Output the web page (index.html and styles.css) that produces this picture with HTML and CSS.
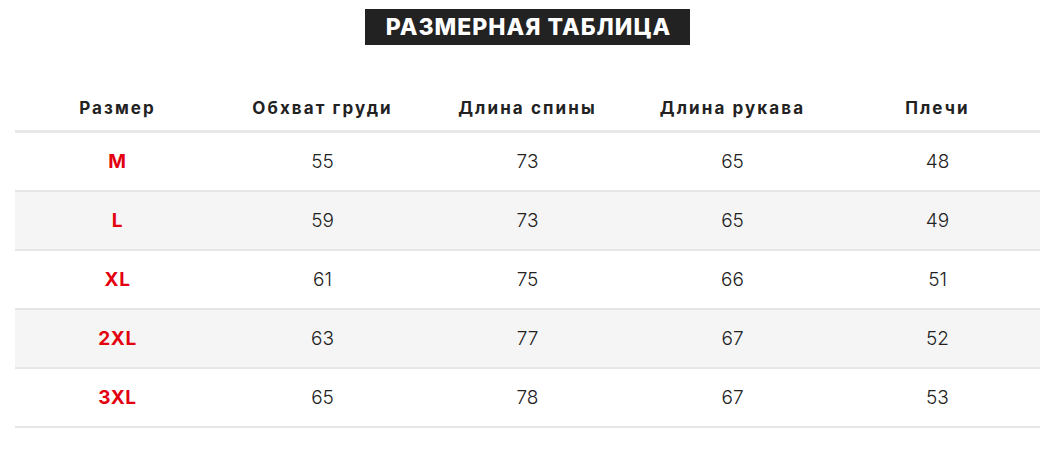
FILE: index.html
```html
<!DOCTYPE html>
<html lang="ru">
<head>
<meta charset="utf-8">
<title>Размерная таблица</title>
<link rel="stylesheet" href="styles.css">
</head>
<body>
<div class="page">
  <div class="title-wrap"><h1 class="title">РАЗМЕРНАЯ ТАБЛИЦА</h1></div>
  <table class="sizes">
    <thead>
      <tr><th>Размер</th><th>Обхват груди</th><th>Длина спины</th><th>Длина рукава</th><th>Плечи</th></tr>
    </thead>
    <tbody>
      <tr><td class="sz">M</td><td>55</td><td>73</td><td>65</td><td>48</td></tr>
      <tr class="alt"><td class="sz">L</td><td>59</td><td>73</td><td>65</td><td>49</td></tr>
      <tr><td class="sz">XL</td><td>61</td><td>75</td><td>66</td><td>51</td></tr>
      <tr class="alt"><td class="sz">2XL</td><td>63</td><td>77</td><td>67</td><td>52</td></tr>
      <tr><td class="sz">3XL</td><td>65</td><td>78</td><td>67</td><td>53</td></tr>
    </tbody>
  </table>
</div>
</body>
</html>
```

FILE: styles.css
```css
html, body {
  margin: 0;
  padding: 0;
  background: #ffffff;
}
body {
  font-family: "Inter", "Open Sans", "Liberation Sans", sans-serif;
  color: #222222;
}
.page {
  padding: 9px 13px 0 15px;
}
.title-wrap {
  display: flex;
  justify-content: center;
}
.title {
  margin: 0;
  background: #222222;
  color: #ffffff;
  font-size: 23px;
  font-weight: 800;
  letter-spacing: 1px;
  height: 36px;
  line-height: 37px;
  padding: 0 19px 0 21px;
}
.sizes {
  width: 100%;
  margin-top: 33px;
  border-collapse: collapse;
  table-layout: fixed;
}
.sizes th {
  font-size: 17px;
  font-weight: 700;
  letter-spacing: 2.1px;
  color: #222222;
  height: 44px;
  text-align: center;
  vertical-align: middle;
  padding: 8px 0 0 0;
  border-bottom: 3px solid #e8e8e8;
}
.sizes td {
  height: 57px;
  padding: 0;
  text-align: center;
  vertical-align: middle;
  font-size: 19px;
  font-weight: 300;
  color: #222222;
  border-bottom: 2px solid #e6e6e6;
}
.sizes tr.alt td {
  background: #f5f5f5;
}
.sizes td.sz {
  color: #e3000f;
  font-weight: 700;
  font-size: 19px;
  letter-spacing: 0.6px;
}
```
